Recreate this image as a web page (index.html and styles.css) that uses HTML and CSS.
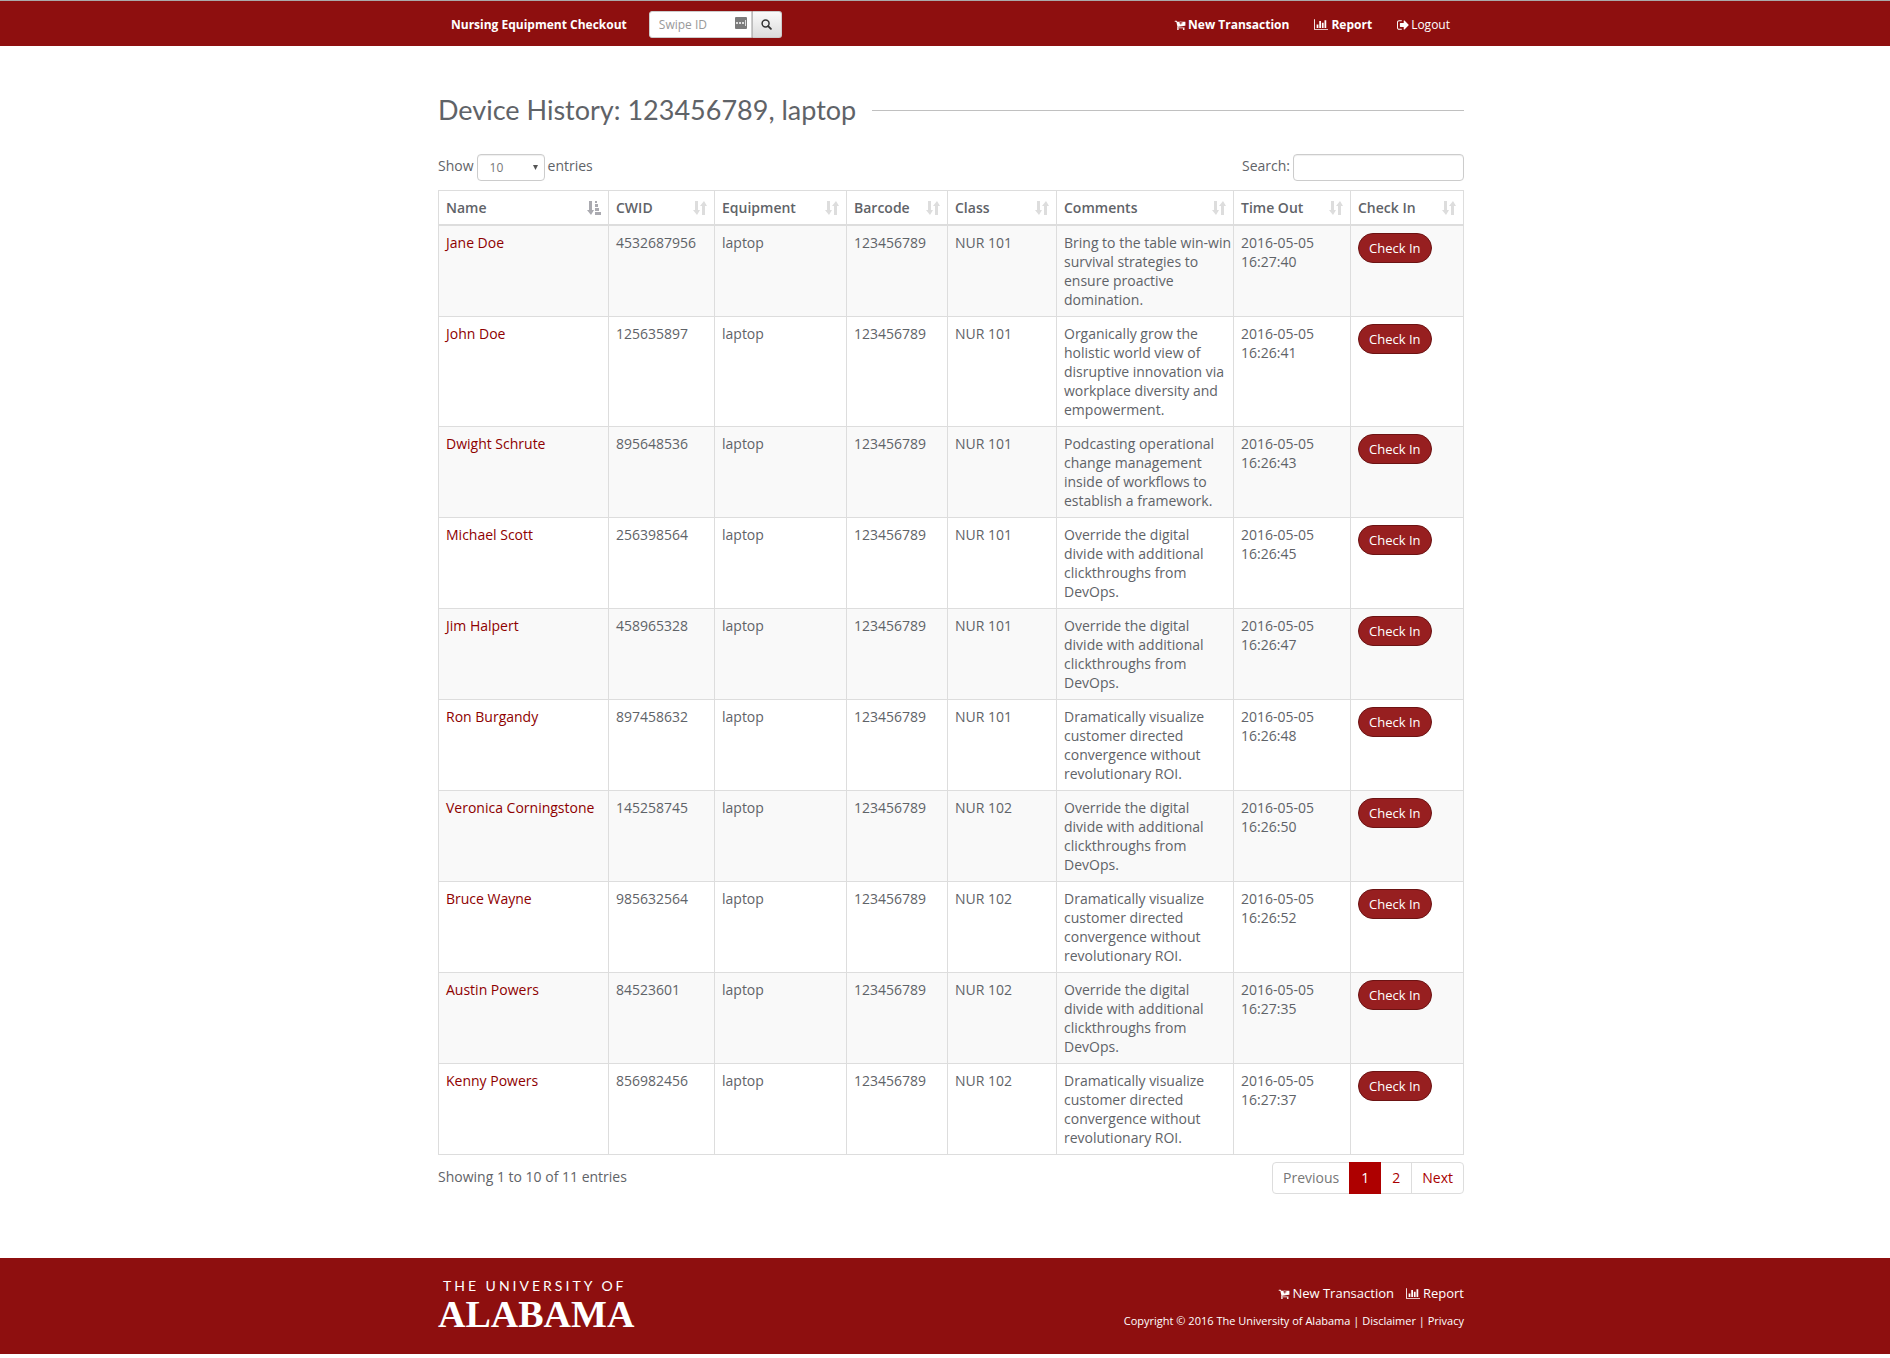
FILE: index.html
```html
<!DOCTYPE html>
<html lang="en">
<head>
<meta charset="utf-8">
<title>Nursing Equipment Checkout</title>
<link rel="stylesheet" href="styles.css">
</head>
<body>
<svg class="sprite" aria-hidden="true">
  <symbol id="cart" viewBox="0 0 1664 1536"><path fill="currentColor" d="M1216 448q0-26-19-45t-45-19h-128V256q0-26-19-45t-45-19-45 19-19 45v128H768q-26 0-45 19t-19 45 19 45 45 19h128v128q0 26 19 45t45 19 45-19 19-45V512h128q26 0 45-19t19-45zM640 1408q0 53-37 90t-91 38-90-38-38-90 38-90 90-38 91 38 37 90zm896 0q0 53-37 90t-91 38-90-38-38-90 38-90 90-38 91 38 37 90zm128-1088v512q0 24-16 43t-41 21L563 1018q1 7 5 22t6 24 2 18q0 16-24 70h920q26 0 45 19t19 45-19 45-45 19H448q-26 0-45-19t-19-45q0-14 11-39t29-59 20-38L267 256H64q-26 0-45-19T0 192t19-45 45-19h256q16 0 29 7t20 16 13 26 8 28 5 30 5 21h1200q26 0 45 19t19 45z"/></symbol>
  <symbol id="chart" viewBox="0 0 2048 1536"><path fill="currentColor" d="M640 768v512H384V768h256zm384-512v1024H768V256h256zm1024 1152v128H0V0h128v1408h1920zM1408 512v768h-256V512h256zm384-384v1152h-256V128h256z"/></symbol>
  <symbol id="logout" viewBox="0 0 1600 1280"><path fill="currentColor" d="M640 1184q0 4 1 20t0 26-3 24-10 19-20 6H288q-119 0-203-85T0 992V288Q0 169 85 85T288 0h320q13 0 22 10t10 22q0 4 1 20t0 27-3 23-10 20-20 6H288q-66 0-113 47t-47 113v704q0 66 47 113t113 47h312q3 0 11 1t12 3 8 5 7 8 2 15zm928-544q0 26-19 45l-544 544q-19 19-45 19t-45-19-19-45V896H448q-26 0-45-19t-19-45V448q0-26 19-45t45-19h448V96q0-26 19-45t45-19 45 19l544 544q19 19 19 45z"/></symbol>
  <symbol id="sort" viewBox="0 0 14 14"><path fill="currentColor" d="M2 0h3v9h2l-3 5-4-5h2zM9 14h3V5h2l-3-5-4 5h2z"/></symbol>
  <symbol id="sorted" viewBox="0 0 14 14"><path fill="currentColor" d="M2 0h3v9h2l-3 5-4-5h2zM8 0h2v2H8zM8 3h3v3H8zM8 7h4v3H8zM8 11h6v3H8z"/></symbol>
</svg>

<header class="navbar">
  <div class="container navbar-inner">
    <a class="brand" href="#">Nursing Equipment Checkout</a>
    <form class="swipe">
      <label class="swipe-field">
        <input type="text" placeholder="Swipe ID" aria-label="Swipe ID">
        <svg class="keypad" viewBox="0 0 12 12" aria-hidden="true"><rect width="12" height="12" rx="1" fill="#7b7b7b"/><path d="M1 5h2v2H1zM4 5h2v2H4zM7 5h2v2H7zM10 3h1v6h-1z" fill="#ddd"/></svg>
      </label>
      <button type="submit" aria-label="Find"><svg viewBox="0 0 12 12" aria-hidden="true"><circle cx="5" cy="5" r="3.8" fill="none" stroke="#333" stroke-width="1.6"/><path d="M7.8 7.8l3 3" stroke="#333" stroke-width="2" stroke-linecap="round"/></svg></button>
    </form>
    <nav class="menu">
      <a href="#"><svg class="icon"><use href="#cart"/></svg>New Transaction</a>
      <a href="#"><svg class="icon wide"><use href="#chart"/></svg>Report</a>
      <a class="plain" href="#"><svg class="icon"><use href="#logout"/></svg>Logout</a>
    </nav>
  </div>
</header>

<main class="container">
  <h1><span>Device History: 123456789, laptop</span></h1>
  <div class="tools">
    <label>Show <select><option>10</option><option>25</option><option>50</option></select> entries</label>
    <label>Search: <input type="search"></label>
  </div>
  <table>
    <colgroup><col class="c-name"><col class="c-cwid"><col class="c-equip"><col class="c-code"><col class="c-class"><col class="c-comments"><col class="c-time"><col class="c-check"></colgroup>
    <thead>
      <tr>
        <th><div>Name<svg class="active"><use href="#sorted"/></svg></div></th>
        <th><div>CWID<svg><use href="#sort"/></svg></div></th>
        <th><div>Equipment<svg><use href="#sort"/></svg></div></th>
        <th><div>Barcode<svg><use href="#sort"/></svg></div></th>
        <th><div>Class<svg><use href="#sort"/></svg></div></th>
        <th><div>Comments<svg><use href="#sort"/></svg></div></th>
        <th><div>Time Out<svg><use href="#sort"/></svg></div></th>
        <th><div>Check In<svg><use href="#sort"/></svg></div></th>
      </tr>
    </thead>
    <tbody>
      <tr><td><a href="#">Jane Doe</a></td><td>4532687956</td><td>laptop</td><td>123456789</td><td>NUR 101</td><td><span class="nowrap">Bring to the table win-win</span> survival strategies to ensure proactive domination.</td><td>2016-05-05 16:27:40</td><td><button type="button">Check In</button></td></tr>
      <tr><td><a href="#">John Doe</a></td><td>125635897</td><td>laptop</td><td>123456789</td><td>NUR 101</td><td>Organically grow the holistic world view of disruptive innovation via workplace diversity and empowerment.</td><td>2016-05-05 16:26:41</td><td><button type="button">Check In</button></td></tr>
      <tr><td><a href="#">Dwight Schrute</a></td><td>895648536</td><td>laptop</td><td>123456789</td><td>NUR 101</td><td>Podcasting operational change management inside of workflows to establish a framework.</td><td>2016-05-05 16:26:43</td><td><button type="button">Check In</button></td></tr>
      <tr><td><a href="#">Michael Scott</a></td><td>256398564</td><td>laptop</td><td>123456789</td><td>NUR 101</td><td>Override the digital divide with additional clickthroughs from DevOps.</td><td>2016-05-05 16:26:45</td><td><button type="button">Check In</button></td></tr>
      <tr><td><a href="#">Jim Halpert</a></td><td>458965328</td><td>laptop</td><td>123456789</td><td>NUR 101</td><td>Override the digital divide with additional clickthroughs from DevOps.</td><td>2016-05-05 16:26:47</td><td><button type="button">Check In</button></td></tr>
      <tr><td><a href="#">Ron Burgandy</a></td><td>897458632</td><td>laptop</td><td>123456789</td><td>NUR 101</td><td>Dramatically visualize customer directed convergence without revolutionary ROI.</td><td>2016-05-05 16:26:48</td><td><button type="button">Check In</button></td></tr>
      <tr><td><a href="#">Veronica Corningstone</a></td><td>145258745</td><td>laptop</td><td>123456789</td><td>NUR 102</td><td>Override the digital divide with additional clickthroughs from DevOps.</td><td>2016-05-05 16:26:50</td><td><button type="button">Check In</button></td></tr>
      <tr><td><a href="#">Bruce Wayne</a></td><td>985632564</td><td>laptop</td><td>123456789</td><td>NUR 102</td><td>Dramatically visualize customer directed convergence without revolutionary ROI.</td><td>2016-05-05 16:26:52</td><td><button type="button">Check In</button></td></tr>
      <tr><td><a href="#">Austin Powers</a></td><td>84523601</td><td>laptop</td><td>123456789</td><td>NUR 102</td><td>Override the digital divide with additional clickthroughs from DevOps.</td><td>2016-05-05 16:27:35</td><td><button type="button">Check In</button></td></tr>
      <tr><td><a href="#">Kenny Powers</a></td><td>856982456</td><td>laptop</td><td>123456789</td><td>NUR 102</td><td>Dramatically visualize customer directed convergence without revolutionary ROI.</td><td>2016-05-05 16:27:37</td><td><button type="button">Check In</button></td></tr>
    </tbody>
  </table>
  <div class="summary">
    <span>Showing 1 to 10 of 11 entries</span>
    <nav class="pages"><a class="off" href="#">Previous</a><a class="current" href="#">1</a><a href="#">2</a><a href="#">Next</a></nav>
  </div>
</main>

<footer class="footer">
  <div class="container footer-inner">
    <a class="logo" href="#"><span class="logo-top">THE UNIVERSITY OF</span><span class="logo-name">ALABAMA</span></a>
    <div class="footer-side">
      <nav class="footer-menu">
        <a href="#"><svg class="icon"><use href="#cart"/></svg>New Transaction</a>
        <a href="#"><svg class="icon wide"><use href="#chart"/></svg>Report</a>
      </nav>
      <p>Copyright © 2016 The University of Alabama | <a href="#">Disclaimer</a> | <a href="#">Privacy</a></p>
    </div>
  </div>
</footer>
</body>
</html>
```
FILE: styles.css
```css
* { box-sizing: border-box; }
body {
  margin: 0;
  min-height: 100vh;
  background: #fff;
  color: #5f6368;
  font: 14px/19px "Open Sans", "Noto Sans", sans-serif;
}
a { color: inherit; text-decoration: none; }
.sprite { display: none; }
.nowrap { white-space: nowrap; }
.container { width: 100%; max-width: 1038px; margin: 0 auto; padding-left: 12px; }

/* Top bar */
.navbar { background: #8e0f0f; border-top: 1px solid #aaa; color: #fff; }
.navbar-inner { display: flex; align-items: center; height: 45px; padding-top: 1px; font-size: 12px; font-weight: 700; }
.brand { margin-left: 13px; }
.swipe { display: flex; margin-left: 22px; }
.swipe-field { display: flex; align-items: center; width: 103px; height: 27px; background: #fff; border: 1px solid #ccc; border-radius: 3px 0 0 3px; }
.swipe input { flex: 1; min-width: 0; padding: 0 0 0 9px; border: 0; background: none; font: 12px "Open Sans", sans-serif; outline: none; }
.swipe input::placeholder { color: #999; }
.keypad { width: 12px; height: 12px; margin: 0 4px 3px 0; }
.swipe button { display: flex; align-items: center; justify-content: center; width: 30px; height: 27px; padding: 0; border: 1px solid #ccc; border-left: 1px solid #bbb; border-radius: 0 3px 3px 0; background: linear-gradient(#fafafa, #dcdcdc); }
.swipe button svg { width: 11px; height: 11px; }
.menu { display: flex; gap: 25px; margin: 0 14px 0 auto; }
.menu .plain { font-weight: 400; }
.icon { width: 12px; height: 10px; margin-right: 2px; vertical-align: -1px; }
.icon.wide { width: 14px; height: 11px; margin-right: 3px; }

/* Page heading */
h1 { display: flex; align-items: center; gap: 16px; margin: 46px 0 26px; color: #5f6368; font: 400 27px/36px Lato, sans-serif; }
h1::after { content: ""; flex: 1; border-top: 1px solid #c0c0c0; }

/* Table controls */
.tools { display: flex; justify-content: space-between; margin-bottom: 9px; }
.tools label { display: flex; gap: 3px; line-height: 24px; }
.tools select, .tools input { height: 27px; border: 1px solid #ccc; border-radius: 4px; background: #fff; color: #777; font: 12px "Open Sans", sans-serif; box-shadow: inset 0 1px 1px #0001; }
.tools select {
  appearance: none;
  width: 68px;
  padding: 0 12px;
  background: #fff url("data:image/svg+xml,%3Csvg xmlns='http://www.w3.org/2000/svg' width='5' height='5'%3E%3Cpath d='M0 0h5L2.500 5z' fill='%23555'/%3E%3C/svg%3E") no-repeat right 6px center;
}
.tools input { width: 171px; }

/* History table */
table { width: 100%; table-layout: fixed; border-collapse: collapse; }
.c-name { width: 170px; } .c-cwid { width: 106px; } .c-equip { width: 132px; } .c-code { width: 101px; }
.c-class { width: 109px; } .c-comments { width: 177px; } .c-time { width: 117px; } .c-check { width: 113px; }
th, td { border: 1px solid #ddd; padding: 7px 2px 7px 7px; text-align: left; vertical-align: top; }
th { border-bottom-width: 2px; font-weight: 600; }
th div { display: flex; justify-content: space-between; align-items: center; }
th svg { width: 14px; height: 14px; margin-right: 5px; color: #ddd; }
th svg.active { color: #aaaab0; }
tbody tr:nth-child(odd) { background: #f9f9f9; }
td a { color: #8e0000; }
td button { display: block; height: 30px; padding: 0 10px; border: 1px solid #6c1313; border-radius: 15px; background: #971f20; color: #fff; font: 13px/18px "Open Sans", sans-serif; }

/* Summary and page links */
.summary { display: flex; justify-content: space-between; padding: 7px 0 64px; line-height: 30px; }
.pages { display: flex; border: 1px solid #ddd; border-radius: 4px; color: #a80000; }
.pages a { padding: 0 11px; }
.pages a + a { border-left: 1px solid #ddd; }
.pages .off, .pages a:last-child { padding: 0 10px; }
.pages .off { color: #777; }
.pages .current { margin: -1px 0; padding: 1px 12px; background: #ae0000; color: #fff; border: 0; }
.pages .current + a { border-left: 0; }

/* Footer */
.footer { background: #8e0f0f; color: #fff; }
.footer-inner { display: flex; justify-content: space-between; padding-top: 20px; padding-bottom: 20px; }
.logo { display: flex; flex-direction: column; }
.logo-top { padding-left: 5px; font: 14px/16px Lato, sans-serif; letter-spacing: 3px; }
.logo-name { font: bold 38px/40px "Liberation Serif", serif; }
.footer-side { text-align: right; padding-top: 6px; }
.footer-menu { display: flex; justify-content: flex-end; gap: 12px; font-size: 13px; }
.footer-side p { margin: 8px 0 0; font-size: 11px; }
```
